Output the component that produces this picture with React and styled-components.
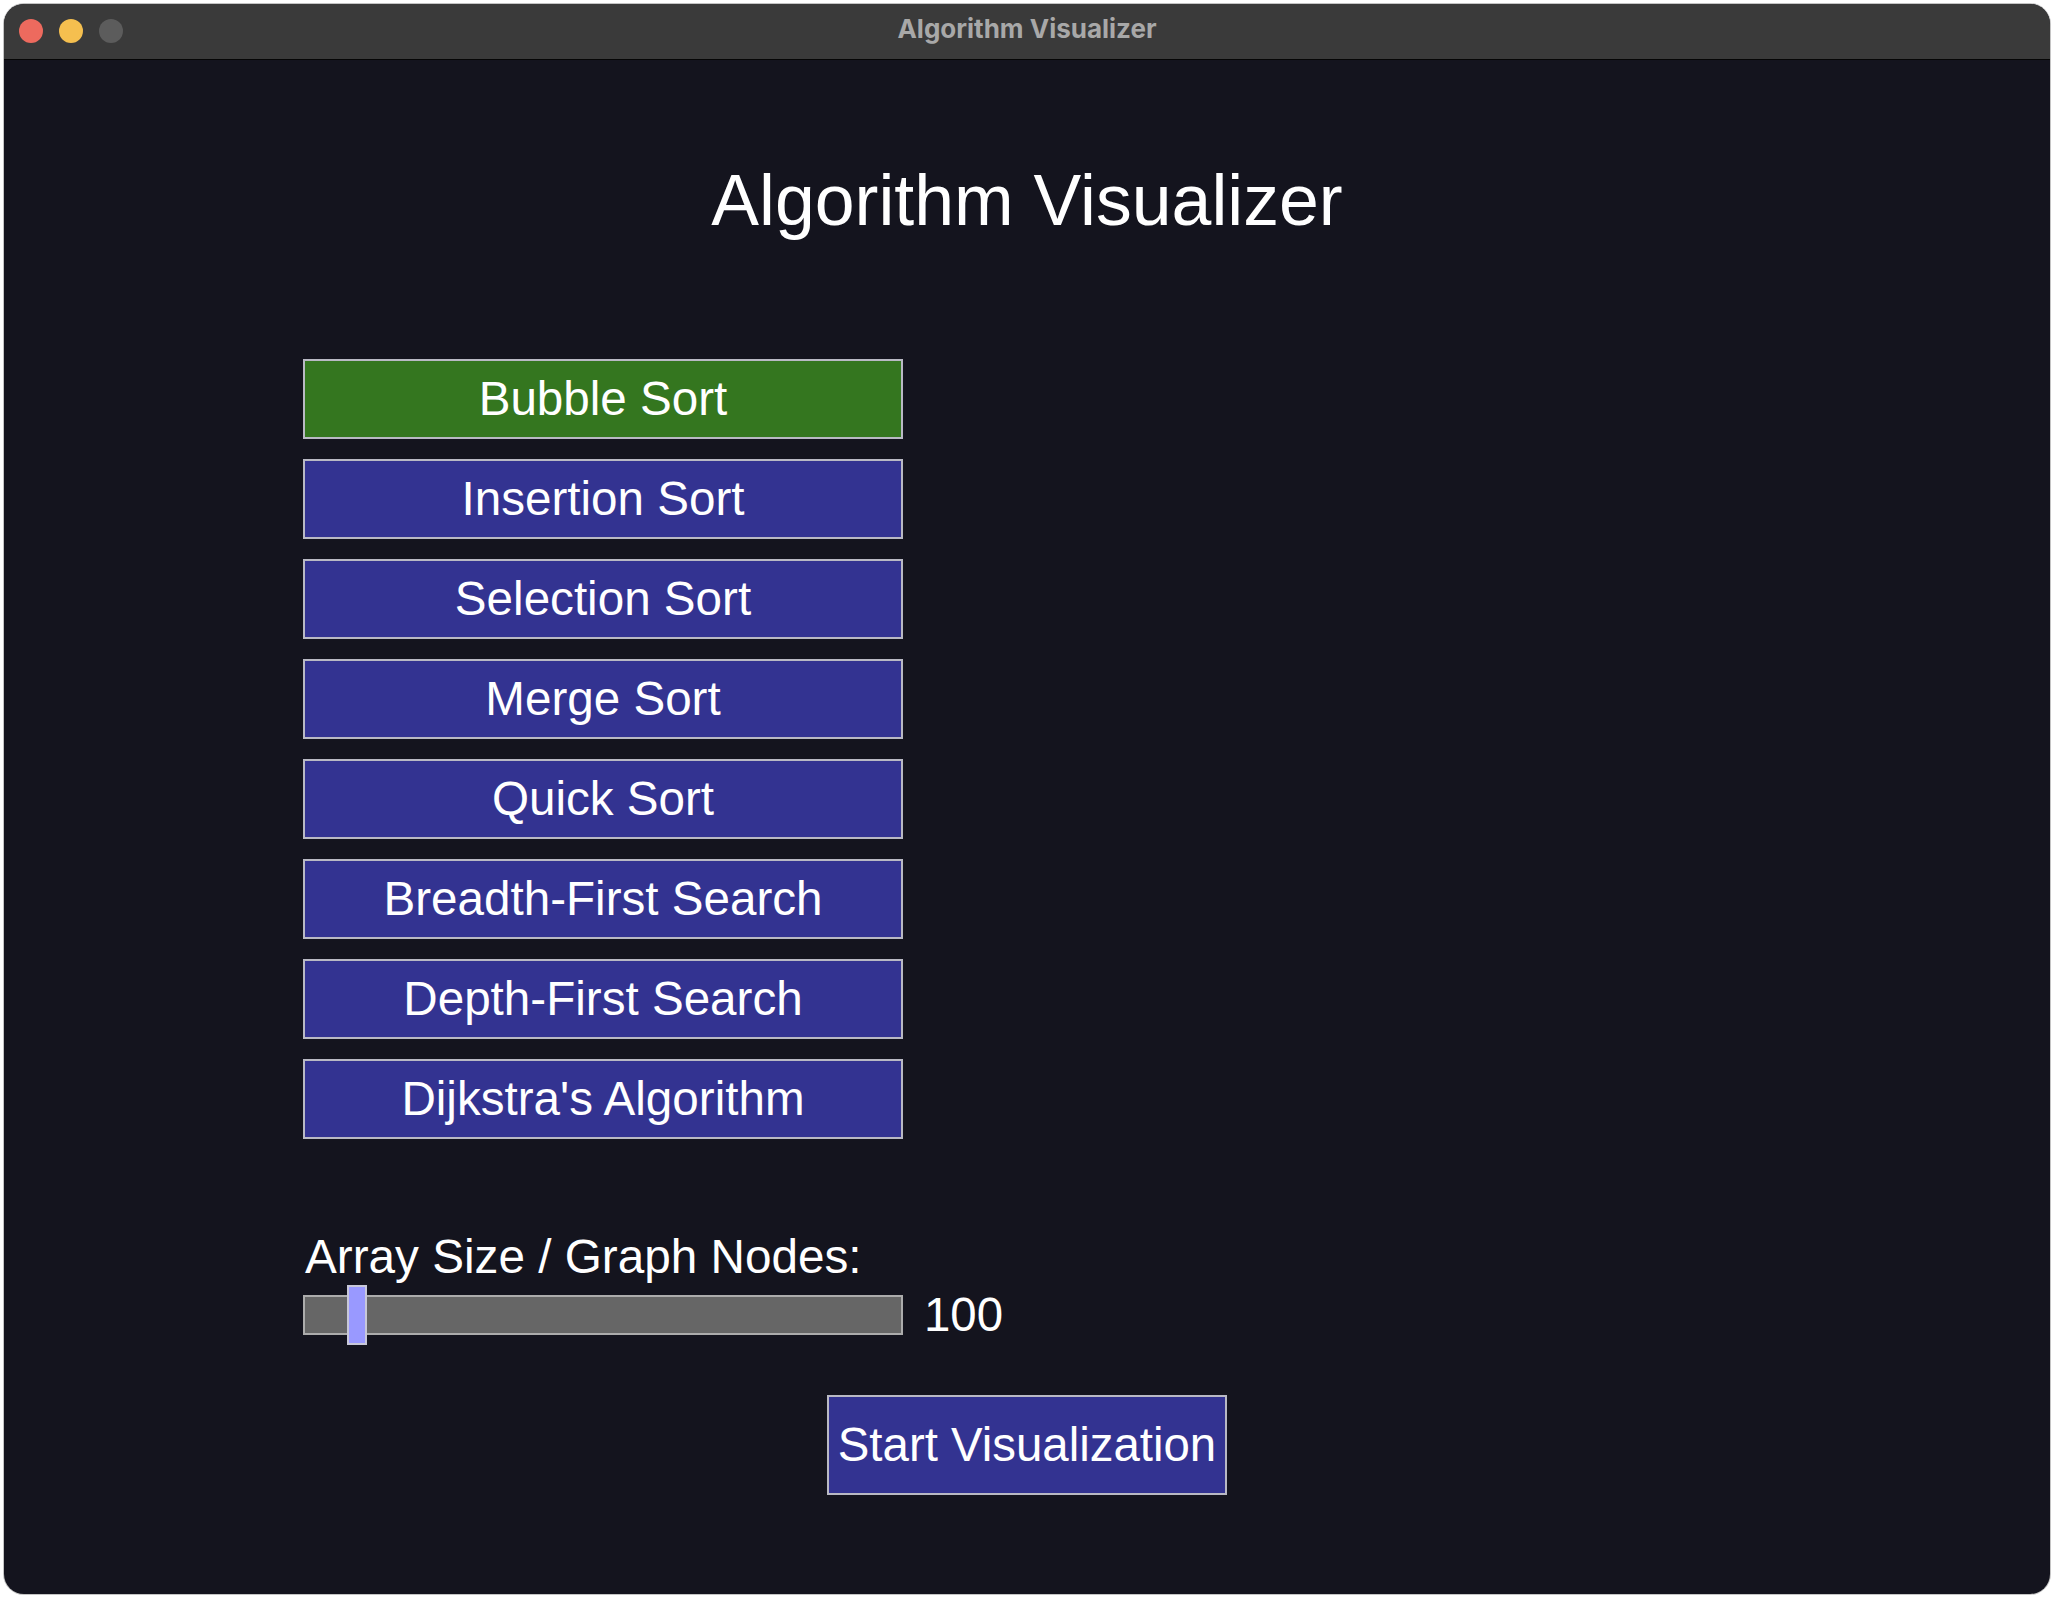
import React from 'react'
import styled, { createGlobalStyle } from 'styled-components'

const GlobalStyle = createGlobalStyle`
    html, body {
        margin: 0;
        padding: 0;
        background: #ffffff;
    }
    * {
        box-sizing: border-box;
    }
`

const Window = styled.div`
    display: flex;
    flex-direction: column;
    width: 2046px;
    height: 1590px;
    margin: 4px;
    border-radius: 20px;
    overflow: hidden;
    background: #14141e;
    box-shadow: 0 0 0 1px #c4c4c4;
`

const TitleBar = styled.div`
    display: grid;
    grid-template-columns: 1fr auto 1fr;
    align-items: center;
    height: 56px;
    flex-shrink: 0;
    padding: 0 15px;
    background: #3a3a3a;
    border-bottom: 1px solid #050505;
`

const Lights = styled.div`
    display: flex;
    gap: 16px;
    margin-bottom: 2px;
`

const Light = styled.span`
    width: 24px;
    height: 24px;
    border-radius: 50%;
    background: ${p => p.color};
`

const WindowTitle = styled.span`
    margin-bottom: 6px;
    font-family: Inter, "Open Sans", sans-serif;
    font-weight: 700;
    font-size: 26px;
    color: #a8a8a8;
`

const Content = styled.div`
    display: flex;
    flex-direction: column;
    flex: 1;
    font-family: "Liberation Sans", Arial, sans-serif;
    color: #ffffff;
`

const Heading = styled.h1`
    margin: 104px 0 0;
    height: 72px;
    font-size: 71.6px;
    line-height: 72px;
    font-weight: 400;
    text-align: center;
`

const Menu = styled.div`
    display: flex;
    flex-direction: column;
    gap: 20px;
    margin: 123px 0 0 299px;
`

const AlgoButton = styled.button`
    display: flex;
    align-items: center;
    justify-content: center;
    width: 600px;
    height: 80px;
    padding: 0;
    border: 2px solid #b9b9c4;
    background: ${p => (p.active ? '#34761f' : '#333391')};
    color: #ffffff;
    font-family: "Liberation Sans", Arial, sans-serif;
    font-size: 47.6px;
    line-height: 48px;
    cursor: pointer;
`

const SizeBlock = styled.div`
    display: flex;
    flex-direction: column;
    gap: 4px;
    margin: 94px 0 0 299px;
`

const SizeLabel = styled.div`
    height: 48px;
    margin-left: 2px;
    font-size: 47.7px;
    line-height: 48px;
`

const SliderRow = styled.div`
    display: flex;
    align-items: center;
    gap: 21px;
    height: 60px;
`

const Track = styled.div`
    position: relative;
    width: 600px;
    height: 40px;
    border: 2px solid #acacac;
    background: #666666;
`

const Knob = styled.div`
    position: absolute;
    top: -12px;
    width: 20px;
    height: 60px;
    border: 2px solid #c8c8d8;
    background: #9999ff;
`

const SizeValue = styled.span`
    font-size: 47.4px;
    line-height: 48px;
`

const StartButton = styled.button`
    align-self: center;
    width: 400px;
    height: 100px;
    margin-top: 50px;
    padding: 0;
    border: 2px solid #b9b9c4;
    background: #333391;
    color: #ffffff;
    font-family: "Liberation Sans", Arial, sans-serif;
    font-size: 47.4px;
    line-height: 48px;
    cursor: pointer;
`

const algorithms = [
    'Bubble Sort',
    'Insertion Sort',
    'Selection Sort',
    'Merge Sort',
    'Quick Sort',
    'Breadth-First Search',
    'Depth-First Search',
    "Dijkstra's Algorithm",
]

const App = () => (
    <Window>
        <GlobalStyle />
        <TitleBar>
            <Lights>
                <Light color='#ed6a5e' />
                <Light color='#f5bf4f' />
                <Light color='#5c5c5c' />
            </Lights>
            <WindowTitle>Algorithm Visualizer</WindowTitle>
            <span />
        </TitleBar>
        <Content>
            <Heading>Algorithm Visualizer</Heading>
            <Menu>
                { algorithms.map((name, i) => (
                    <AlgoButton key={ name } active={ i === 0 }>{ name }</AlgoButton>
                )) }
            </Menu>
            <SizeBlock>
                <SizeLabel>Array Size / Graph Nodes:</SizeLabel>
                <SliderRow>
                    <Track>
                        <Knob style={ { left: 42 } } />
                    </Track>
                    <SizeValue>100</SizeValue>
                </SliderRow>
            </SizeBlock>
            <StartButton>Start Visualization</StartButton>
        </Content>
    </Window>
)

export default App
